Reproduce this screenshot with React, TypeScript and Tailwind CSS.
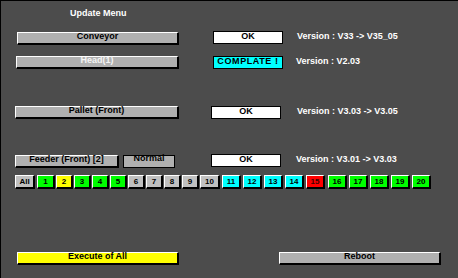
import React from "react";

const btn =
  "box-border flex justify-center items-start border-t border-l border-t-white border-l-white border-b-2 border-r-2 border-b-black border-r-black text-[9px] leading-[7px]";

function Btn({ label, cls, textCls = "text-black" }: { label: string; cls: string; textCls?: string }) {
  return (
    <div className={`${btn} h-[13px] ${cls}`}>
      <span className={textCls}>{label}</span>
    </div>
  );
}

function Box({ label, cls, bg = "bg-white" }: { label: string; cls: string; bg?: string }) {
  return (
    <div
      className={`box-border h-[13px] w-[70px] border border-black flex justify-center items-start text-black text-[9px] leading-[9px] ${bg} ${cls}`}
    >
      <span>{label}</span>
    </div>
  );
}

function Ver({ text, cls }: { text: string; cls: string }) {
  return <div className={`text-white text-[9px] leading-[11px] whitespace-pre ${cls}`}>{text}</div>;
}

const nums: { n: string; bg: string; w: string; ml: string; tc?: string }[] = [
  { n: "All", bg: "bg-[#c0c0c0]", w: "w-[20px]", ml: "ml-0" },
  { n: "1", bg: "bg-[#00ff00]", w: "w-[18px]", ml: "ml-[2px]" },
  { n: "2", bg: "bg-[#ffff00]", w: "w-[17px]", ml: "ml-[1px]" },
  { n: "3", bg: "bg-[#00ff00]", w: "w-[17px]", ml: "ml-[1px]" },
  { n: "4", bg: "bg-[#00ff00]", w: "w-[17px]", ml: "ml-[1px]" },
  { n: "5", bg: "bg-[#00ff00]", w: "w-[17px]", ml: "ml-[1px]" },
  { n: "6", bg: "bg-[#c0c0c0]", w: "w-[17px]", ml: "ml-[1px]" },
  { n: "7", bg: "bg-[#c0c0c0]", w: "w-[17px]", ml: "ml-[1px]" },
  { n: "8", bg: "bg-[#c0c0c0]", w: "w-[17px]", ml: "ml-[1px]" },
  { n: "9", bg: "bg-[#c0c0c0]", w: "w-[17px]", ml: "ml-[1px]" },
  { n: "10", bg: "bg-[#c0c0c0]", w: "w-[20px]", ml: "ml-[1px]" },
  { n: "11", bg: "bg-[#00ffff]", w: "w-[19px]", ml: "ml-[2px]" },
  { n: "12", bg: "bg-[#00ffff]", w: "w-[19px]", ml: "ml-[2px]" },
  { n: "13", bg: "bg-[#00ffff]", w: "w-[19px]", ml: "ml-[2px]" },
  { n: "14", bg: "bg-[#00ffff]", w: "w-[19px]", ml: "ml-[2px]" },
  { n: "15", bg: "bg-[#ff0000]", w: "w-[19px]", ml: "ml-[2px]", tc: "text-[#400000]" },
  { n: "16", bg: "bg-[#00ff00]", w: "w-[19px]", ml: "ml-[3px]" },
  { n: "17", bg: "bg-[#00ff00]", w: "w-[19px]", ml: "ml-[2px]" },
  { n: "18", bg: "bg-[#00ff00]", w: "w-[19px]", ml: "ml-[2px]" },
  { n: "19", bg: "bg-[#00ff00]", w: "w-[19px]", ml: "ml-[2px]" },
  { n: "20", bg: "bg-[#00ff00]", w: "w-[19px]", ml: "ml-[2px]" },
];

export default function App() {
  return (
    <div className="box-border w-[458px] h-[278px] bg-[#4c4c4c] border-t border-l border-black overflow-hidden font-bold [font-family:'Liberation_Sans',Arial,sans-serif] flex flex-col">
      <div className="mt-[7px] ml-[69px] h-[11px] leading-[11px] text-white text-[9px]">Update Menu</div>

      <div className="mt-[12px] h-[14px] flex items-start">
        <Btn label="Conveyor" cls="mt-px ml-[16px] w-[162px] bg-[#b0b0b0]" />
        <Box label="OK" cls="ml-[34px]" />
        <Ver text="Version : V33 -> V35_05" cls="ml-[14px]" />
      </div>

      <div className="mt-[11px] h-[13px] flex items-start">
        <Btn label="Head(1)" cls="ml-[15px] w-[163px] bg-[#b0b0b0]" textCls="text-[#f4f4f4]" />
        <Box label="COMPLATE !" cls="ml-[34px] tracking-[0.6px]" bg="bg-[#00ffff]" />
        <Ver text="Version : V2.03" cls="ml-[13px]" />
      </div>

      <div className="mt-[37px] h-[13px] flex items-start">
        <Btn label="Pallet (Front)" cls="ml-[14px] w-[164px] bg-[#b0b0b0]" />
        <Box label="OK" cls="ml-[32px]" />
        <Ver text="Version : V3.03 -> V3.05" cls="ml-[16px]" />
      </div>

      <div className="mt-[35px] h-[14px] flex items-start">
        <Btn label="Feeder (Front) [2]" cls="mt-px ml-[14px] w-[104px] bg-[#b0b0b0]" />
        <div className="box-border mt-px ml-[4px] w-[52px] h-[13px] border border-black bg-[#b0b0b0] flex justify-center items-start text-black text-[9px] leading-[5px]">
          <span>Normal</span>
        </div>
        <Box label="OK" cls="ml-[36px]" />
        <Ver text="Version : V3.01 -> V3.03" cls="ml-[15px]" />
      </div>

      <div className="mt-[7px] ml-[14px] h-[14px] flex items-start">
        {nums.map((b) => (
          <div
            key={b.n}
            className={`box-border h-[14px] ${b.w} ${b.ml} ${b.bg} border-t border-l border-t-white border-l-white border-b-2 border-r-2 border-b-black border-r-black flex justify-center items-center text-[8px] leading-[8px] ${b.tc ?? "text-black"}`}
          >
            <span>{b.n}</span>
          </div>
        ))}
      </div>

      <div className="mt-[63px] h-[13px] flex items-start">
        <Btn label="Execute of All" cls="ml-[16px] w-[162px] bg-[#ffff00]" />
        <Btn label="Reboot" cls="ml-[100px] w-[162px] bg-[#b0b0b0]" />
      </div>
    </div>
  );
}
